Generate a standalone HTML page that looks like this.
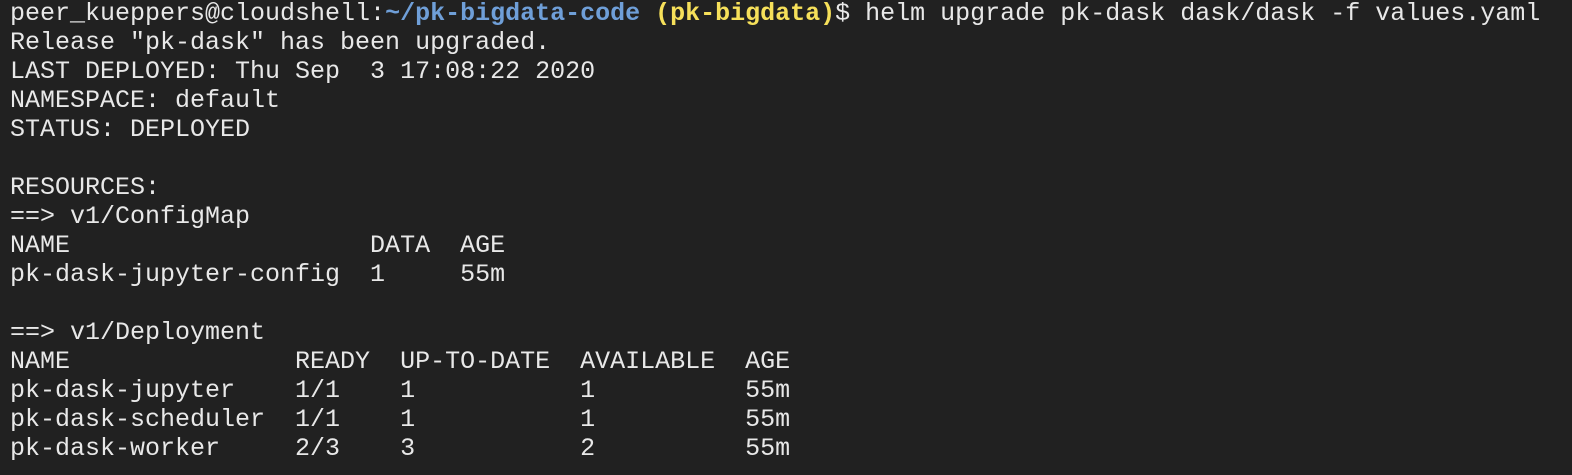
<!DOCTYPE html>
<html><head><style>
html,body{margin:0;padding:0;background:#212121;width:1572px;height:475px;overflow:hidden}
pre{margin:-1px 0 0 0;padding:0 0 0 10px;font-family:"Liberation Mono","Courier New",monospace;font-size:25px;line-height:29px;color:#e8e8e8;letter-spacing:0}
.b{color:#6f9fd8;font-weight:bold}.y{color:#f6e05a;font-weight:bold}
</style></head><body><pre>peer_kueppers@cloudshell:<span class="b">~/pk-bigdata-code</span> <span class="y">(pk-bigdata)</span>$ helm upgrade pk-dask dask/dask -f values.yaml
Release "pk-dask" has been upgraded.
LAST DEPLOYED: Thu Sep  3 17:08:22 2020
NAMESPACE: default
STATUS: DEPLOYED

RESOURCES:
==&gt; v1/ConfigMap
NAME                    DATA  AGE
pk-dask-jupyter-config  1     55m

==&gt; v1/Deployment
NAME               READY  UP-TO-DATE  AVAILABLE  AGE
pk-dask-jupyter    1/1    1           1          55m
pk-dask-scheduler  1/1    1           1          55m
pk-dask-worker     2/3    3           2          55m
</pre></body></html>
